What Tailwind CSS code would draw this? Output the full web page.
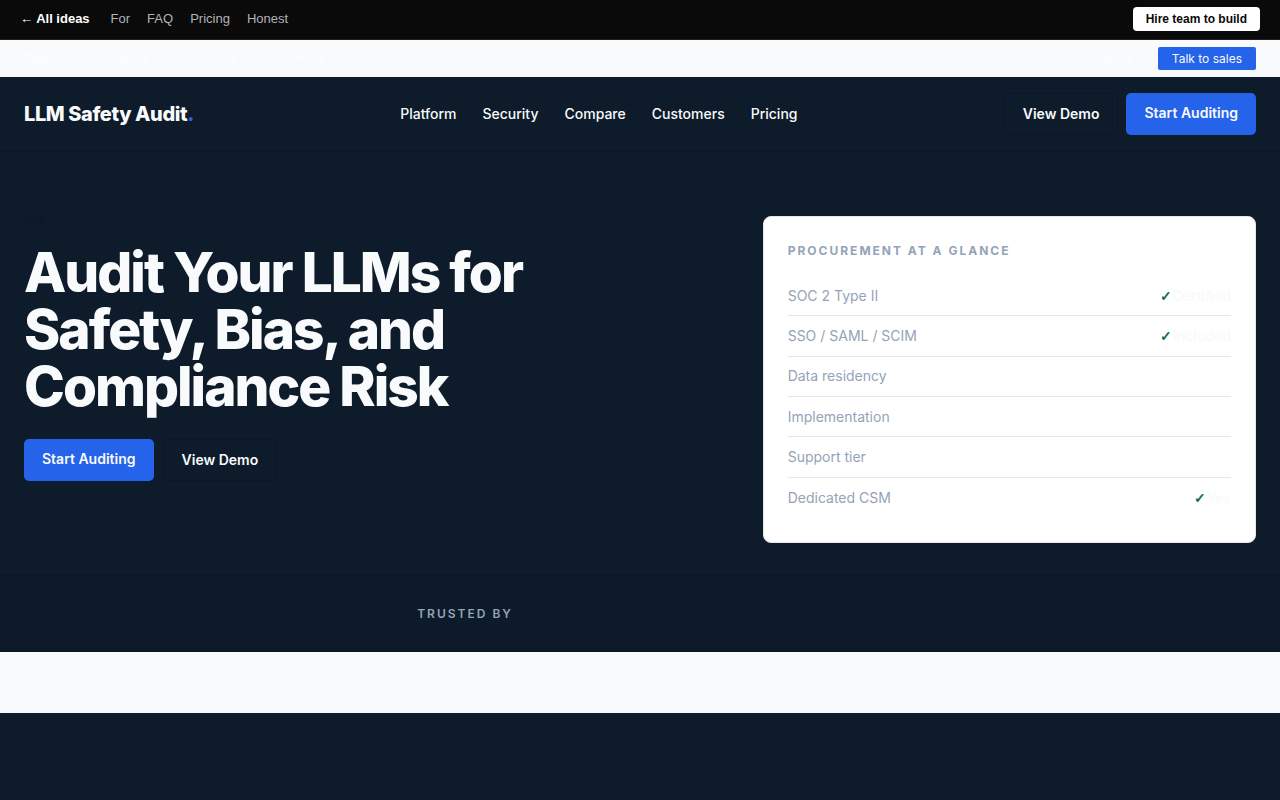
<!DOCTYPE html>
<html lang="en">
<head>
<meta charset="utf-8">
<meta name="viewport" content="width=device-width, initial-scale=1">
<title>LLM Safety Audit</title>
<script src="https://cdn.jsdelivr.net/npm/@tailwindcss/browser@4"></script>
</head>
<body class="min-h-screen bg-[#0d1b2a] font-['Inter',sans-serif] text-[#f8fafc]">

<div class="flex h-10 items-center justify-between border-b border-[#1f1f1f] bg-[#0a0a0a] px-5 pb-px font-['Liberation_Sans',sans-serif] text-[13px] leading-5 text-[#b3b3b3]">
  <nav aria-label="Ideas" class="flex items-center gap-[17px]">
    <a href="#" class="mr-1 font-bold text-white">← All ideas</a>
    <a href="#">For</a>
    <a href="#">FAQ</a>
    <a href="#">Pricing</a>
    <a href="#">Honest</a>
  </nav>
  <a href="#" class="rounded bg-white px-[13px] py-0.5 text-xs leading-5 font-bold text-[#0a0a0a]">Hire team to build</a>
</div>

<div class="flex h-[37px] items-center justify-between bg-[#f8fafc] px-6 text-xs leading-5 text-[#fefefe]">
  <nav aria-label="Utility" class="flex gap-[26px]">
    <a href="#">Platform</a>
    <a href="#">Solutions</a>
    <a href="#">Resources</a>
    <a href="#">Customers</a>
  </nav>
  <div class="flex items-center gap-6">
    <a href="#">Sign in</a>
    <a href="#" class="rounded-xs bg-[#2563eb] px-3.5 py-0.5 leading-[19px] text-[#f8fafc]">Talk to sales</a>
  </div>
</div>

<header class="flex h-[75px] items-center justify-between border-b border-[#0b1724] px-6">
  <a href="#" class="text-xl font-extrabold tracking-[-0.4px]">LLM Safety Audit<span class="text-[#2563eb]">.</span></a>
  <nav aria-label="Main" class="flex gap-[26px] text-sm leading-5 font-medium">
    <a href="#">Platform</a>
    <a href="#">Security</a>
    <a href="#">Compare</a>
    <a href="#">Customers</a>
    <a href="#">Pricing</a>
  </nav>
  <div class="flex gap-2 text-sm leading-5 font-semibold">
    <a href="#" class="rounded-[5px] border border-[#0b1724] px-[18px] py-2.5">View Demo</a>
    <a href="#" class="rounded-[5px] bg-[#2563eb] px-[18px] py-2.5">Start Auditing</a>
  </div>
</header>

<main>
  <section class="grid grid-cols-[1.4fr_1fr] gap-12 px-6 pt-16 pb-8">
    <div>
      <div class="h-2 w-[21px] rounded-full bg-[#0c1928]"></div>
      <h1 class="mt-5 max-w-[560px] text-[55px] leading-[57px] font-extrabold tracking-[-2px]">Audit Your LLMs for Safety, Bias, and Compliance Risk</h1>
      <div class="mt-6 flex gap-[9px] text-sm leading-5 font-semibold">
        <a href="#" class="rounded-[5px] bg-[#2563eb] px-[18px] py-2.5">Start Auditing</a>
        <a href="#" class="rounded-[5px] border border-[#0b1724] px-[18px] py-2.5">View Demo</a>
      </div>
      <div class="mt-8 max-w-[560px] border-t border-[#0b1826]"></div>
    </div>
    <aside class="rounded-lg border border-[#e5e7eb] bg-white p-6 text-[#94a3b8]">
      <h2 class="text-xs leading-[19px] font-bold tracking-[2px] uppercase">Procurement at a glance</h2>
      <dl class="mt-4 grid h-[242px] auto-rows-fr divide-y divide-[#e5e7eb] text-sm leading-5">
        <div class="flex items-center justify-between"><dt>SOC 2 Type II</dt><dd class="font-semibold text-[#f8fafc]"><span class="font-['Liberation_Sans'] font-bold text-[#15704f]">✓</span>Certified</dd></div>
        <div class="flex items-center justify-between"><dt>SSO / SAML / SCIM</dt><dd class="font-semibold text-[#f8fafc]"><span class="font-['Liberation_Sans'] font-bold text-[#15704f]">✓</span>Included</dd></div>
        <div class="flex items-center justify-between"><dt>Data residency</dt><dd></dd></div>
        <div class="flex items-center justify-between"><dt>Implementation</dt><dd></dd></div>
        <div class="flex items-center justify-between"><dt>Support tier</dt><dd></dd></div>
        <div class="flex items-center justify-between"><dt>Dedicated CSM</dt><dd class="font-semibold text-[#f8fafc]"><span class="font-['Liberation_Sans'] font-bold text-[#15704f]">✓</span>Yes</dd></div>
      </dl>
    </aside>
  </section>

  <section class="flex h-[77px] items-center justify-center gap-12 border-y border-[#0b1724] bg-[#0d1a29] px-6">
    <h2 class="text-xs leading-5 font-semibold tracking-[2px] text-[#94a3b8] uppercase">Trusted by</h2>
    <div class="w-[302px]"></div>
  </section>
  <section class="h-[61px] bg-[#f8fafc]"></section>
</main>
</body>
</html>
